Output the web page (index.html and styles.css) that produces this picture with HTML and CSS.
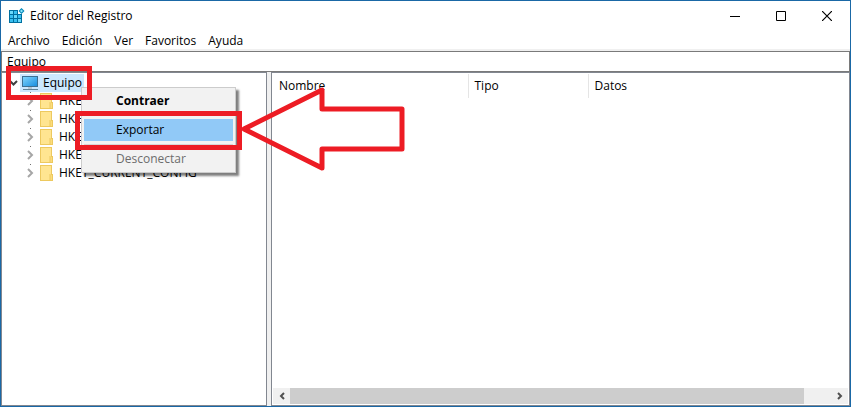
FILE: index.html
```
<!DOCTYPE html>
<html lang="es">

<head>
    <meta charset="UTF-8">
    <meta name="viewport" content="width=device-width, initial-scale=1.0">
    <title>Editor del Registro</title>
    <link rel="stylesheet" href="styles.css">
</head>

<body>
    <!-- iconos que se repiten -->
    <svg class="defs" width="0" height="0" aria-hidden="true">
        <symbol id="folder" viewBox="0 0 14 16">
            <path d="M0 0h12v9h1v7H0z" fill="#edc95f" />
            <path d="M1 1h10v14H1z" fill="#ffe591" />
            <path d="M10 10h2v5h-2z" fill="#fbdc7c" />
            <path d="M10 9v6" stroke="#edc95f" />
        </symbol>
        <symbol id="chevron" viewBox="0 0 8 10">
            <path d="M2 1l4 4-4 4" fill="none" stroke="#a6a6a6" stroke-width="2" />
        </symbol>
    </svg>

    <div class="window">
        <header class="title-bar">
            <svg class="app-icon" width="16" height="16" viewBox="0 0 16 16" aria-hidden="true">
                <path d="M0 2h9v4h4v9H0z" fill="#006f9f" />
                <path d="M1 3h3v3H1zM5 3h3v3H5zM1 7h3v3H1zM5 7h3v3H5zM9 7h3v3H9zM1 11h3v3H1zM5 11h3v3H5zM9 11h3v3H9z" fill="#38bff0" />
                <path d="M1 3h3v3H1zM5 7h3v3H5zM9 11h3v3H9z" fill="#6bd9fa" />
                <path d="M12.500 0L15.500 3l-3 3-3-3z" fill="#0087b8" />
                <path d="M12.500 1.500L14 3l-1.500 1.500L11 3z" fill="#8be3fa" />
            </svg>
            <h1>Editor del Registro</h1>
            <div class="window-buttons">
                <button type="button" aria-label="Minimizar">
                    <svg width="10" height="10" viewBox="0 0 10 10"><path d="M0 5.500h10" stroke="#000" /></svg>
                </button>
                <button type="button" aria-label="Maximizar">
                    <svg width="10" height="10" viewBox="0 0 10 10"><path d="M.5.5h9v9h-9z" fill="none" stroke="#000" /></svg>
                </button>
                <button type="button" aria-label="Cerrar">
                    <svg width="10" height="10" viewBox="0 0 10 10"><path d="M0 0l10 10M10 0L0 10" stroke="#000" stroke-width="1.200" /></svg>
                </button>
            </div>
        </header>

        <nav class="menu-bar">
            <button type="button">Archivo</button>
            <button type="button">Edición</button>
            <button type="button">Ver</button>
            <button type="button">Favoritos</button>
            <button type="button">Ayuda</button>
        </nav>

        <input class="address" type="text" value="Equipo" aria-label="Ruta de la clave">

        <main class="panes">
            <section class="tree-pane">
                <div class="tree-row root">
                    <svg class="expander" width="10" height="8" viewBox="0 0 10 8" aria-hidden="true">
                        <path d="M1 2l3.500 3.500L8 2" fill="none" stroke="#404040" stroke-width="2" />
                    </svg>
                    <span class="root-label">
                        <svg width="17" height="16" viewBox="0 0 17 16" aria-hidden="true">
                            <defs>
                                <linearGradient id="screen" x1="0" y1="0" x2="1" y2="1">
                                    <stop offset="0" stop-color="#7fd4fb" />
                                    <stop offset="1" stop-color="#1a8fe0" />
                                </linearGradient>
                            </defs>
                            <path d="M0 1h16v11H0z" fill="#3d6f91" />
                            <path d="M1 2h14v9H1z" fill="url(#screen)" />
                            <path d="M6 12h4v2H6z" fill="#b9c8d2" />
                            <path d="M1 14h15v1H1z" fill="#5f8297" />
                        </svg>
                        Equipo
                    </span>
                </div>
                <ul class="keys">
                    <li class="tree-row"><svg class="expander" width="8" height="10"><use href="#chevron" /></svg><svg class="folder" width="14" height="16"><use href="#folder" /></svg>HKEY_CLASSES_ROOT</li>
                    <li class="tree-row"><svg class="expander" width="8" height="10"><use href="#chevron" /></svg><svg class="folder" width="14" height="16"><use href="#folder" /></svg>HKEY_CURRENT_USER</li>
                    <li class="tree-row"><svg class="expander" width="8" height="10"><use href="#chevron" /></svg><svg class="folder" width="14" height="16"><use href="#folder" /></svg>HKEY_LOCAL_MACHINE</li>
                    <li class="tree-row"><svg class="expander" width="8" height="10"><use href="#chevron" /></svg><svg class="folder" width="14" height="16"><use href="#folder" /></svg>HKEY_USERS</li>
                    <li class="tree-row"><svg class="expander" width="8" height="10"><use href="#chevron" /></svg><svg class="folder" width="14" height="16"><use href="#folder" /></svg>HKEY_CURRENT_CONFIG</li>
                </ul>
            </section>

            <section class="list-pane">
                <table class="values">
                    <thead>
                        <tr>
                            <th class="col-name" scope="col">Nombre</th>
                            <th class="col-type" scope="col">Tipo</th>
                            <th scope="col">Datos</th>
                        </tr>
                    </thead>
                </table>
                <div class="scrollbar">
                    <button type="button" aria-label="Desplazar a la izquierda">
                        <svg width="8" height="8" viewBox="0 0 8 8"><path d="M6 1L3 4l3 3" fill="none" stroke="#505050" stroke-width="2" /></svg>
                    </button>
                    <div class="track"><div class="thumb"></div></div>
                    <button type="button" aria-label="Desplazar a la derecha">
                        <svg width="8" height="8" viewBox="0 0 8 8"><path d="M2 1l3 3-3 3" fill="none" stroke="#505050" stroke-width="2" /></svg>
                    </button>
                </div>
            </section>
        </main>

        <div class="context-menu">
            <button type="button" class="default">Contraer</button>
            <hr>
            <button type="button" class="active">Exportar</button>
            <hr>
            <button type="button" disabled>Desconectar</button>
        </div>

        <!-- marcas rojas de la guía -->
        <div class="mark mark-root"></div>
        <div class="mark mark-export"></div>
        <svg class="arrow" width="166" height="86" viewBox="0 0 166 86" aria-hidden="true">
            <path d="M4 43L82 4v19h80v40H82v19z" fill="none" stroke="#ed1c24" stroke-width="5" stroke-linejoin="round" />
        </svg>
    </div>
</body>

</html>
```

FILE: styles.css
```
* {
    box-sizing: border-box;
}

body {
    margin: 0;
    font-family: "Open Sans", "Noto Sans", sans-serif;
    font-size: 12px;
    line-height: 16px;
    color: #000;
}

button,
input {
    margin: 0;
    padding: 0;
    border: 0;
    background: none;
    font: inherit;
    color: inherit;
}

svg {
    display: block;
    flex: none;
}

.defs {
    position: absolute;
}

.window {
    position: relative;
    display: flex;
    flex-direction: column;
    height: 100vh;
    border: 1px solid #1a68a6;
    background: #fff;
}

/* barra de título */
.title-bar {
    display: flex;
    align-items: center;
    height: 30px;
    padding-left: 8px;
}

.title-bar h1 {
    flex: 1;
    margin: 0 0 0 5px;
    font-size: 12px;
    font-weight: 400;
}

.window-buttons {
    display: flex;
}

.window-buttons button {
    display: flex;
    align-items: center;
    justify-content: center;
    width: 46px;
    height: 28px;
}

.menu-bar {
    display: flex;
    gap: 12px;
    height: 20px;
    padding: 2px 7px 0;
    border-bottom: 2px solid #f0f0f0;
}

.address {
    width: 100%;
    height: 21px;
    padding: 0 5px;
    border: 1px solid #7a7a7a;
}

/* paneles */
.panes {
    display: flex;
    flex: 1;
    gap: 4px;
    background: #f0f0f0;
}

.tree-pane,
.list-pane {
    border: 1px solid #828790;
    background: #fff;
}

.tree-pane {
    width: 266px;
    padding: 1px 0;
    overflow: hidden;
}

.tree-row {
    display: flex;
    align-items: center;
    height: 18px;
    white-space: nowrap;
}

.root {
    padding-left: 7px;
}

.root-label {
    display: flex;
    align-items: center;
    gap: 4px;
    height: 18px;
    margin-left: 1px;
    padding: 0 2px;
    background: #cce8ff;
}

.keys {
    margin: 0;
    padding: 0 0 0 24px;
    list-style: none;
    background: repeating-linear-gradient(#707070 0 1px, transparent 1px 18px) 28px 0 / 1px 90px no-repeat;
}

.keys .expander {
    margin-right: 6px;
}

.keys .folder {
    margin-right: 5px;
}

.list-pane {
    display: flex;
    flex: 1;
    flex-direction: column;
    justify-content: space-between;
    padding: 1px;
}

.values {
    width: 100%;
    border-collapse: collapse;
    table-layout: fixed;
}

.values th {
    height: 24px;
    padding: 0 6px;
    font-weight: 400;
    text-align: left;
}

.values .col-name {
    width: 195px;
    border-right: 1px solid #e5e5e5;
}

.values .col-type {
    width: 120px;
    border-right: 1px solid #e5e5e5;
}

.scrollbar {
    display: flex;
    height: 16px;
    background: #f0f0f0;
}

.scrollbar button {
    display: flex;
    align-items: center;
    justify-content: center;
    width: 17px;
}

.track {
    flex: 1;
}

.thumb {
    width: 95%;
    height: 100%;
    background: #cdcdcd;
}

/* menú contextual */
.context-menu {
    position: absolute;
    top: 86px;
    left: 80px;
    width: 155px;
    padding: 2px;
    border: 1px solid #ccc;
    background: #f2f2f2;
    box-shadow: 3px 3px 2px rgba(0, 0, 0, .5);
}

.context-menu button {
    display: block;
    width: 100%;
    height: 22px;
    padding-left: 32px;
    text-align: left;
}

.context-menu .default {
    font-weight: 700;
}

.context-menu .active {
    background: #91c9f7;
}

.context-menu button:disabled {
    color: #6d6d6d;
}

.context-menu hr {
    height: 1px;
    margin: 3px 0;
    border: 0;
    background: #d7d7d7;
}

/* marcas */
.mark {
    position: absolute;
    border: 5px solid #ed1c24;
}

.mark-root {
    top: 65px;
    left: 5px;
    width: 86px;
    height: 34px;
}

.mark-export {
    top: 110px;
    left: 74px;
    width: 167px;
    height: 39px;
}

.arrow {
    position: absolute;
    top: 85px;
    left: 239px;
}
```
